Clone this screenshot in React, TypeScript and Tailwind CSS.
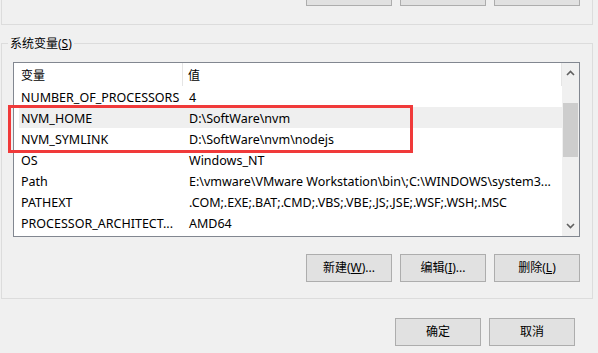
import React from "react";

const font = { fontFamily: '"Noto Sans", "Noto Sans CJK SC", sans-serif' };

const rows: [string, string][] = [
  ["NUMBER_OF_PROCESSORS", "4"],
  ["NVM_HOME", "D:\\SoftWare\\nvm"],
  ["NVM_SYMLINK", "D:\\SoftWare\\nvm\\nodejs"],
  ["OS", "Windows_NT"],
  ["Path", "E:\\vmware\\VMware Workstation\\bin\\;C:\\WINDOWS\\system3..."],
  ["PATHEXT", ".COM;.EXE;.BAT;.CMD;.VBS;.VBE;.JS;.JSE;.WSF;.WSH;.MSC"],
  ["PROCESSOR_ARCHITECT...", "AMD64"],
];

function Btn({ children, className = "" }: { children?: React.ReactNode; className?: string }) {
  return (
    <div
      className={`w-[86px] h-[28px] flex items-center justify-center bg-[#e1e1e1] border border-[#adadad] text-[12px] text-black ${className}`}
    >
      {children}
    </div>
  );
}

export default function App() {
  return (
    <div
      className="w-[598px] h-[353px] bg-[#f0f0f0] overflow-hidden flex flex-col text-[12px] text-black leading-none"
      style={font}
    >
      {/* top group box (partially visible) */}
      <div className="ml-[1px] w-[592px] h-[25px] border-x border-b border-[#dcdcdc] flex flex-col">
        <div className="flex justify-end gap-[8px] pr-[12px] -mt-[22px]">
          <Btn />
          <Btn />
          <Btn />
        </div>
      </div>

      {/* system variables group box */}
      <div className="relative ml-[1px] mt-[18px] w-[592px] h-[256px] border border-[#dcdcdc] flex flex-col">
        <div className="absolute left-[6px] -top-[8px] px-[2px] bg-[#f0f0f0] h-[15px] flex items-center">
          系统变量(<span className="underline">S</span>)
        </div>

        {/* list view */}
        <div className="relative ml-[11px] mt-[18px] w-[567px] h-[175px] border border-[#828790] bg-white flex">
          <div className="flex-1 flex flex-col text-[12.5px]">
            {/* header */}
            <div className="h-[23px] flex items-center text-[12px]">
              <div className="w-[169px] h-full pl-[7px] pt-[2px] flex items-center border-r border-[#e5e5e5]">变量</div>
              <div className="flex-1 h-full pl-[5px] pt-[2px] flex items-center border-r border-[#e5e5e5]">值</div>
            </div>
            {rows.map(([k, v], i) => (
              <div
                key={k}
                className={`h-[21px] pt-[4px] flex items-center ${i === 1 ? "bg-[#efefef] ml-[5px]" : ""}`}
              >
                <div className={`${i === 1 ? "w-[164px] pl-[2px]" : "w-[169px] pl-[7px]"} whitespace-nowrap`}>{k}</div>
                <div className="flex-1 pl-[6px] whitespace-nowrap">{v}</div>
              </div>
            ))}
          </div>
          {/* scrollbar */}
          <div className="w-[17px] h-full bg-[#f0f0f0] flex flex-col items-center">
            <div className="h-[17px] w-full flex items-center justify-center mt-[1px]">
              <svg width="9" height="6" viewBox="0 0 9 6">
                <path d="M1 5 L4.5 1.5 L8 5" stroke="#606060" strokeWidth="1.6" fill="none" />
              </svg>
            </div>
            <div className="mt-[22px] w-[15px] h-[54px] bg-[#cdcdcd]" />
            <div className="flex-1" />
            <div className="h-[17px] w-full flex items-center justify-center mb-[2px]">
              <svg width="9" height="6" viewBox="0 0 9 6">
                <path d="M1 1 L4.5 4.5 L8 1" stroke="#606060" strokeWidth="1.6" fill="none" />
              </svg>
            </div>
          </div>
        </div>

        {/* buttons */}
        <div className="flex justify-end gap-[8px] pr-[12px] mt-[17px]">
          <Btn>
            新建(<span className="underline">W</span>)...
          </Btn>
          <Btn>
            编辑(<span className="underline">I</span>)...
          </Btn>
          <Btn>
            删除(<span className="underline">L</span>)
          </Btn>
        </div>

        {/* red highlight rectangle */}
        <div className="absolute left-[6px] top-[61px] w-[405px] h-[48px] border-[3px] border-[#f03a3a]" />
      </div>

      {/* OK / Cancel */}
      <div className="flex justify-end gap-[8px] pr-[23px] mt-[19px]">
        <Btn>确定</Btn>
        <Btn>取消</Btn>
      </div>
    </div>
  );
}
